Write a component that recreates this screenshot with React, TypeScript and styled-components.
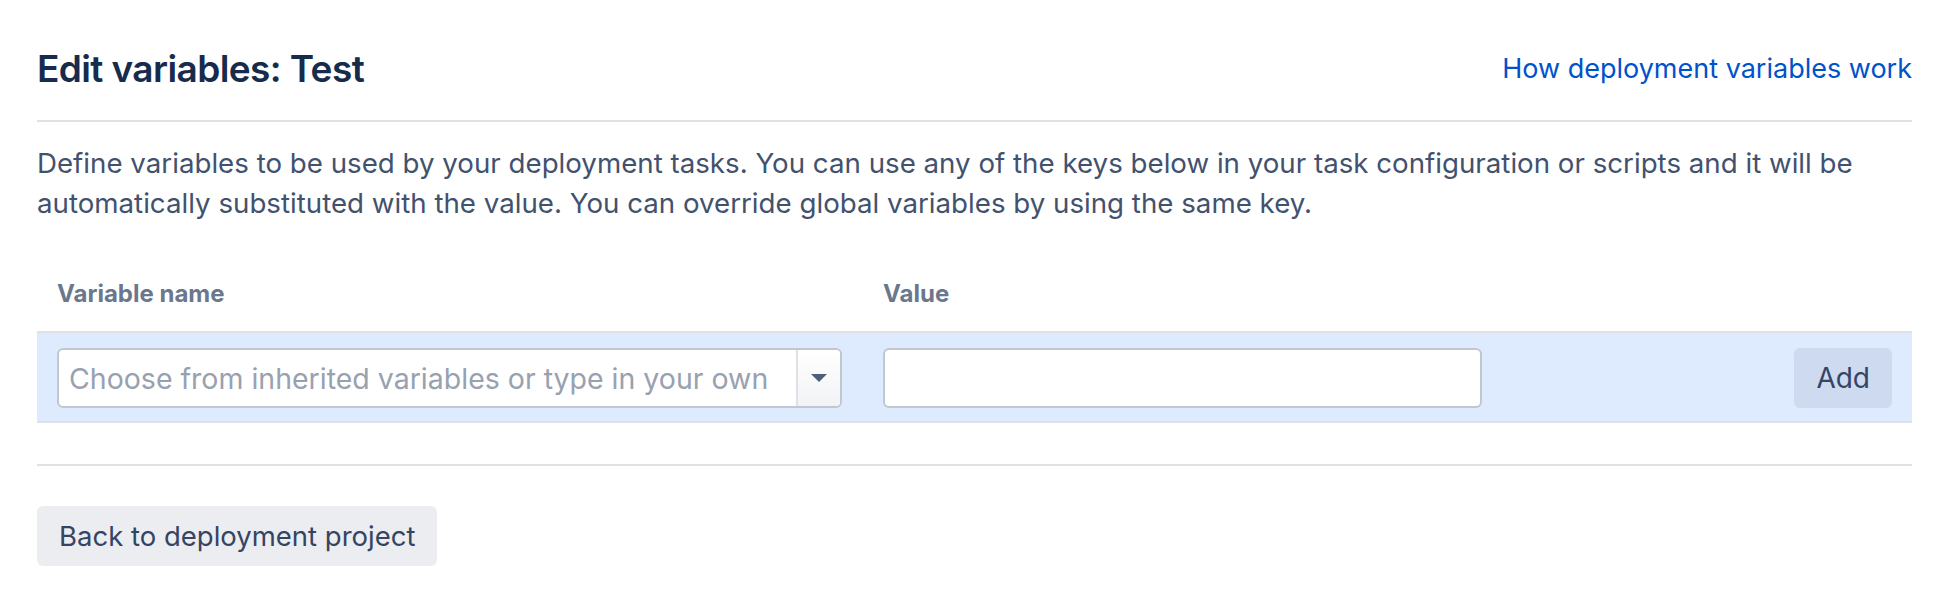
import React, { useState } from 'react';
import styled, { createGlobalStyle } from 'styled-components';

const GlobalStyle = createGlobalStyle`
  html, body {
    margin: 0;
    padding: 0;
    background: #ffffff;
  }
  body {
    font-family: Inter, "Liberation Sans", Arial, sans-serif;
    color: #42526e;
    -webkit-font-smoothing: antialiased;
  }
  * {
    box-sizing: border-box;
  }
`;

const App: React.FC = () => {
  const [name, setName] = useState('');
  const [value, setValue] = useState('');

  return (
    <>
      <GlobalStyle />
      <Page>
        <Header>
          <Title>Edit variables: Test</Title>
          <HelpLink href="#">How deployment variables work</HelpLink>
        </Header>

        <Description>
          Define variables to be used by your deployment tasks. You can use any of the keys below in your
          task configuration or scripts and it will be automatically substituted with the value. You can
          override global variables by using the same key.
        </Description>

        <Table>
          <HeadRow>
            <HeadCell>Variable name</HeadCell>
            <HeadCell>Value</HeadCell>
            <HeadCell />
          </HeadRow>
          <EditRow>
            <Combo>
              <ComboInput
                value={name}
                onChange={(e) => setName(e.target.value)}
                placeholder="Choose from inherited variables or type in your own"
              />
              <ComboToggle type="button" aria-label="Show variables">
                <svg width="16" height="8" viewBox="0 0 16 8">
                  <path d="M0 0 L16 0 L8 8 Z" fill="#505f79" />
                </svg>
              </ComboToggle>
            </Combo>
            <TextField value={value} onChange={(e) => setValue(e.target.value)} />
            <ActionCell>
              <Button subtle>Add</Button>
            </ActionCell>
          </EditRow>
        </Table>

        <Footer>
          <Button>Back to deployment project</Button>
        </Footer>
      </Page>
    </>
  );
};

export default App;

const Page = styled.div`
  padding: 46px 38px 40px 37px;
`;

const Header = styled.div`
  display: flex;
  align-items: center;
  justify-content: space-between;
  padding-bottom: 28px;
  border-bottom: 2px solid #dfe1e6;
`;

const Title = styled.h2`
  margin: 0;
  font-size: 37px;
  line-height: 46px;
  font-weight: 600;
  letter-spacing: -0.6px;
  color: #172b4d;
`;

const HelpLink = styled.a`
  font-size: 27px;
  line-height: 36px;
  color: #0052cc;
  text-decoration: none;
`;

const Description = styled.p`
  margin: 21px 0 0;
  font-size: 27.7px;
  line-height: 40px;
  color: #42526e;
`;

const Table = styled.div`
  margin-top: 55px;
`;

const columns = `785px 599px 1fr`;

const HeadRow = styled.div`
  display: grid;
  grid-template-columns: ${columns};
  column-gap: 41px;
  padding: 0 20px 21px;
`;

const HeadCell = styled.div`
  font-size: 24px;
  line-height: 32px;
  font-weight: 700;
  color: #6b778c;
`;

const EditRow = styled.div`
  display: grid;
  grid-template-columns: ${columns};
  column-gap: 41px;
  align-items: center;
  padding: 15px 20px 13px;
  background: #deebff;
  border-top: 2px solid #dfe1e6;
  border-bottom: 2px solid #dfe1e6;
`;

const Combo = styled.div`
  display: flex;
  height: 60px;
  background: #ffffff;
  border: 2px solid #c1c7d0;
  border-radius: 6px;
  overflow: hidden;
`;

const ComboInput = styled.input`
  flex: 1;
  min-width: 0;
  border: none;
  outline: none;
  padding: 0 10px;
  font-family: inherit;
  font-size: 28.5px;
  color: #172b4d;
  background: transparent;

  &::placeholder {
    color: #98a1b0;
  }
`;

const ComboToggle = styled.button`
  width: 44px;
  border: none;
  border-left: 2px solid #dfe1e6;
  background: linear-gradient(#ffffff, #f2f3f5);
  display: flex;
  align-items: center;
  justify-content: center;
  padding: 0;
  cursor: pointer;
`;

const TextField = styled.input`
  height: 60px;
  width: 100%;
  border: 2px solid #c1c7d0;
  border-radius: 6px;
  background: #ffffff;
  outline: none;
  padding: 0 10px;
  font-family: inherit;
  font-size: 28px;
  color: #172b4d;
`;

const ActionCell = styled.div`
  display: flex;
  justify-content: flex-end;
`;

const Button = styled.button<{ subtle?: boolean }>`
  height: 60px;
  padding: 0 22px;
  border: none;
  border-radius: 6px;
  background: rgba(9, 30, 66, 0.08);
  font-family: inherit;
  font-size: ${({ subtle }) => (subtle ? '28px' : '27.5px')};
  color: #344563;
  cursor: pointer;
`;

const Footer = styled.div`
  margin-top: 41px;
  padding-top: 40px;
  border-top: 2px solid #dfe1e6;
`;
